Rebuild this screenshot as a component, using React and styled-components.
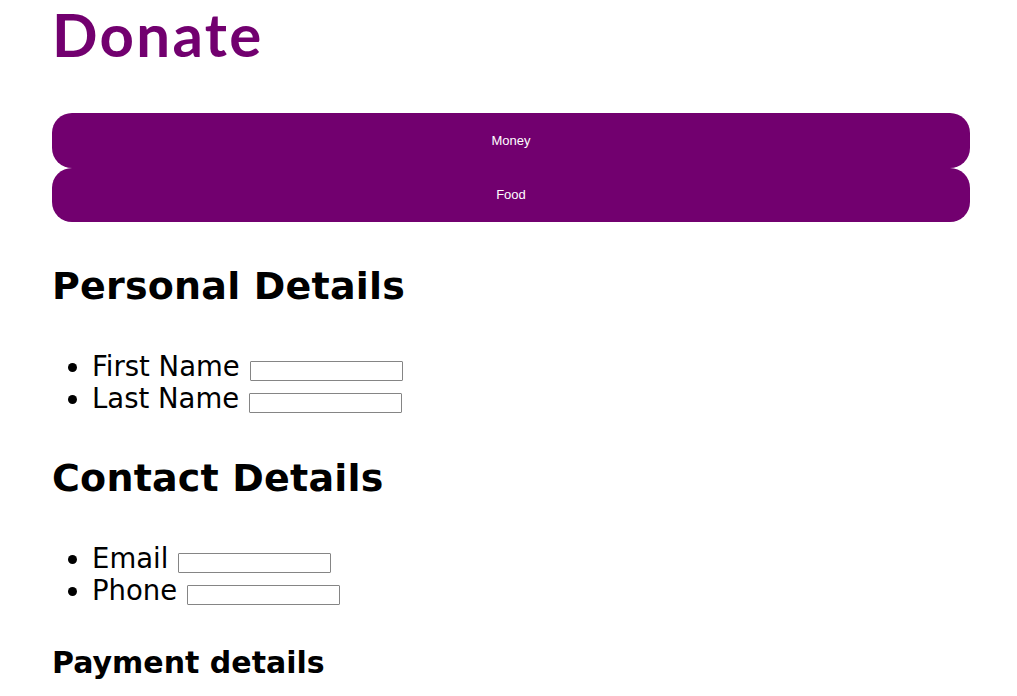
import React from "react";
import styled, { createGlobalStyle } from "styled-components";

const GlobalStyle = createGlobalStyle`
  html, body { margin: 0; padding: 0; background: #ffffff; }
  body { font-family: "DejaVu Sans", Lato, sans-serif; color: #000; }
`;

const Page = styled.main`
  padding: 0 47px 40px 52px;
`;

const Title = styled.h1`
  margin: 4px 0 49px;
  font-family: Lato, "DejaVu Sans", sans-serif;
  font-size: 60px;
  line-height: 60px;
  letter-spacing: 2.3px;
  font-weight: 700;
  color: #72006f;
`;

const ChoiceList = styled.div`
  display: flex;
  flex-direction: column;
`;

const Choice = styled.button`
  display: flex;
  align-items: center;
  justify-content: center;
  height: 54.5px;
  width: 100%;
  border: none;
  border-radius: 20px;
  background: #72006f;
  color: #ffffff;
  font-family: "Liberation Sans", Arial, sans-serif;
  font-size: 13px;
  padding: 0;
  cursor: pointer;
`;

const SectionTitle = styled.h2`
  margin: 42px 0 0;
  font-size: 38px;
  line-height: 44px;
  letter-spacing: 0.2px;
  font-weight: 700;
`;

const SubTitle = styled.h3`
  margin: 39px 0 0;
  font-size: 30px;
  line-height: 36px;
  font-weight: 700;
`;

const FieldList = styled.ul`
  margin: 42px 0 0;
  padding-left: 40px;
  list-style: disc;
`;

const Field = styled.li`
  font-size: 27.5px;
  line-height: 32px;
`;

const Input = styled.input`
  box-sizing: border-box;
  width: 153px;
  height: 20px;
  margin: 0 0 1px 1px;
  padding: 1px 2px;
  border: 1px solid #858585;
  border-radius: 1px;
  background: #fff;
  font-family: "Liberation Sans", Arial, sans-serif;
  font-size: 13px;
  vertical-align: bottom;
`;

const sections = [
  { title: "Personal Details", fields: ["First Name", "Last Name"] },
  { title: "Contact Details", fields: ["Email", "Phone"] },
];

export default function App() {
  return (
    <>
      <GlobalStyle />
      <Page>
        <Title>Donate</Title>
        <ChoiceList>
          <Choice>Money</Choice>
          <Choice>Food</Choice>
        </ChoiceList>
        {sections.map((s) => (
          <section key={s.title}>
            <SectionTitle>{s.title}</SectionTitle>
            <FieldList>
              {s.fields.map((f) => (
                <Field key={f}>
                  {f} <Input type="text" />
                </Field>
              ))}
            </FieldList>
          </section>
        ))}
        <SubTitle>Payment details</SubTitle>
      </Page>
    </>
  );
}
